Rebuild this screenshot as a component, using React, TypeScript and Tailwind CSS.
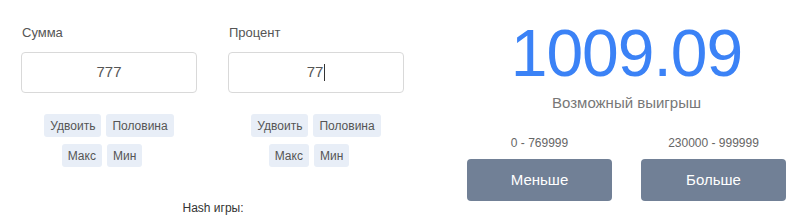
import React from 'react'

function Chip({ label }: { label: string }) {
  return (
    <button className="h-[23px] rounded-[3px] bg-[#e8eef7] px-[6px] text-[12px] text-[#555]">
      {label}
    </button>
  )
}

function Field({ label, value, caret }: { label: string; value: string; caret?: boolean }) {
  return (
    <div className="flex w-[176px] flex-col">
      <div className="mt-[25px] h-[16px] pl-px text-[13px] leading-[16px] text-[#555]">{label}</div>
      <div className="mt-[11px] flex h-[41px] items-center justify-center rounded-[4px] border border-[#d9d9d9] bg-white text-[15px] text-[#555]">
        <span>{value}</span>
        {caret && <span className="ml-px h-[17px] w-px bg-[#333]" />}
      </div>
      <div className="mt-[21px] flex flex-col items-center gap-[7px]">
        <div className="flex gap-[5px]">
          <Chip label="Удвоить" />
          <Chip label="Половина" />
        </div>
        <div className="flex gap-[5px] pr-[14px]">
          <Chip label="Макс" />
          <Chip label="Мин" />
        </div>
      </div>
    </div>
  )
}

function Bet({ range, label }: { range: string; label: string }) {
  return (
    <div className="flex w-[145px] flex-col items-center">
      <div className="h-[14px] text-[12px] leading-[14px] text-[#666]">{range}</div>
      <button className="mt-[9px] h-[42px] w-full rounded-[4px] bg-[#718096] text-[15px] text-white">
        {label}
      </button>
    </div>
  )
}

export default function App() {
  return (
    <div className="flex h-[219px] w-[797px] bg-white font-['Liberation_Sans',Arial,sans-serif]">
      <div className="flex w-[426px] flex-col">
        <div className="flex gap-[31px] pl-[21px]">
          <Field label="Сумма" value="777" />
          <Field label="Процент" value="77" caret />
        </div>
        <div className="mt-[34px] text-center text-[12px] leading-[14px] text-[#333]">Hash игры:</div>
      </div>
      <div className="ml-[41px] flex w-[319px] flex-col items-center">
        <div className="mt-[20px] text-[66px] leading-[66px] tracking-[-1px] text-[#3b82f6]">1009.09</div>
        <div className="mt-[8px] text-[15px] leading-[18px] text-[#777]">Возможный выигрыш</div>
        <div className="mt-[24px] flex w-full justify-between">
          <Bet range="0 - 769999" label="Меньше" />
          <Bet range="230000 - 999999" label="Больше" />
        </div>
      </div>
    </div>
  )
}
